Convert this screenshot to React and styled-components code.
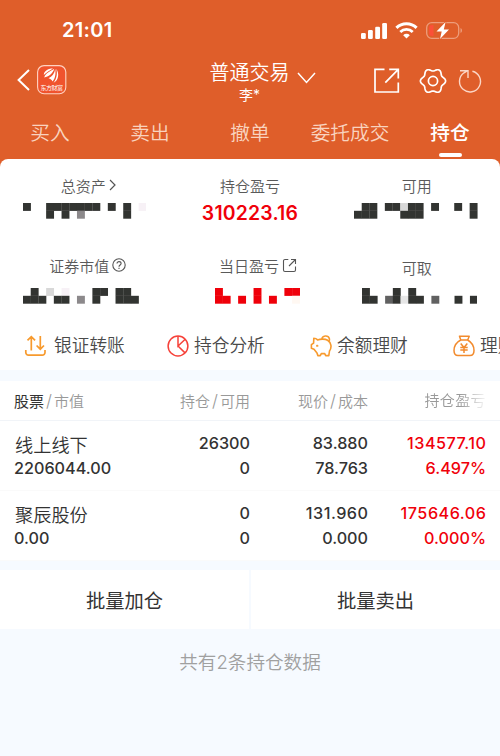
import React from "react";
import styled, { createGlobalStyle } from "styled-components";

const GlobalStyle = createGlobalStyle`
  * {
    box-sizing: border-box;
  }
  body {
    margin: 0;
    background-color: #f6faff;
    font-family: Inter, "Noto Sans CJK SC", sans-serif;
    color: #333;
  }
`;

const Container = styled.div`
  width: 500px;
  height: 756px;
  overflow: hidden;
  background-color: #f6faff;
`;

// Header Styling
const Header = styled.header`
  height: 167px;
  background-color: #df5e2a;
  color: white;
`;

const StatusBar = styled.div`
  height: 60px;
  padding: 0 37px 0 62px;
  display: flex;
  align-items: center;
  justify-content: space-between;
`;

const Clock = styled.div`
  font-size: 20px;
  font-weight: 600;
  line-height: 24px;
  letter-spacing: 0.3px;
`;

const StatusIcons = styled.div`
  display: flex;
  align-items: center;
  gap: 8px;
`;

const TitleBar = styled.div`
  height: 48px;
  padding: 0 18px 0 17px;
  display: grid;
  grid-template-columns: 1fr auto 1fr;
  align-items: start;
`;

const Left = styled.div`
  padding-top: 5px;
  display: flex;
  align-items: center;
  gap: 7px;
`;

const Center = styled.div`
  text-align: center;
`;

const Title = styled.div`
  height: 22px;
  display: flex;
  align-items: center;
  font-size: 20px;
  font-weight: 350;

  svg {
    margin: 14px -26px 0 7px;
  }
`;

const UserName = styled.div`
  font-size: 14px;
  line-height: 26px;
`;

const Right = styled.div`
  padding-top: 5px;
  height: 36px;
  display: flex;
  align-items: center;
  justify-content: flex-end;

  & > :nth-child(2) {
    margin: 0 11px 0 19px;
  }
`;

const Tabs = styled.nav`
  height: 51px;
  display: flex;
`;

const Tab = styled.div`
  flex: 1;
  display: flex;
  flex-direction: column;
  align-items: center;
  font-size: 19.7px;
  line-height: 30px;
  padding-top: 10px;
  font-weight: ${(props) => (props.$active ? 500 : 350)};
  color: ${(props) => (props.$active ? "#fff" : "#f9d3bf")};

  &::after {
    content: "";
    width: 23px;
    height: 4px;
    margin-top: 5px;
    border-radius: 2px;
    background-color: ${(props) => (props.$active ? "#fff" : "transparent")};
  }
`;

// Summary Styling
const Summary = styled.section`
  height: 211px;
  margin-top: -8px;
  border-radius: 8px 8px 0 0;
  background-color: #fff;
  overflow: hidden;
`;

const Stats = styled.div`
  height: 163px;
  padding-top: 15px;
  display: grid;
  grid-template-columns: repeat(3, 1fr);
  grid-template-rows: 80px 68px;
`;

const Stat = styled.div`
  display: flex;
  flex-direction: column;
  align-items: center;
`;

const StatLabel = styled.div`
  height: 22px;
  display: flex;
  align-items: center;
  gap: 3px;
  margin-top: ${(props) => props.$offset || 0}px;
  padding-left: ${(props) => props.$indent || 0}px;
  font-size: 15px;
  font-weight: 350;
  color: #5a5a5a;
`;

const StatValue = styled.div`
  margin-top: 5px;
  font-size: 19.4px;
  line-height: 24px;
  font-weight: 600;
  letter-spacing: 0.2px;
  color: #f0000a;
`;

const MosaicBox = styled.div`
  width: 124px;
  margin-top: ${(props) => props.$top}px;
  margin-left: ${(props) => props.$shift || 0}px;
  padding-left: ${(props) => props.$indent || 0}px;

  svg {
    display: block;
  }
`;

const Shortcuts = styled.div`
  height: 48px;
  display: flex;
  align-items: center;
  padding-left: 24px;
`;

const Shortcut = styled.div`
  width: 143px;
  flex-shrink: 0;
  display: flex;
  align-items: center;
  gap: ${(props) => props.$gap}px;
  font-size: 17.7px;
  font-weight: 350;
  line-height: 26px;
  white-space: nowrap;
  color: #4a4a4a;
`;

// Positions Styling
const Positions = styled.section`
  margin-top: 11px;
  height: 180px;
  background-color: #fff;
`;

const Columns = styled.div`
  display: grid;
  grid-template-columns: 136px 100px 118px 118px;
  padding: 0 14px;
  text-align: right;

  & > :first-child {
    text-align: left;
  }
`;

const TableHead = styled(Columns)`
  height: 40px;
  line-height: 40px;
  border-bottom: 1px solid #f1f4f8;
  font-size: 15px;
  font-weight: 350;
  color: #999;
`;

const Strong = styled.span`
  font-weight: 400;
  color: #333;
`;

const Slash = styled.span`
  display: inline-block;
  width: 10px;
  text-align: center;
  font-size: 17px;
`;

const Faded = styled.div`
  letter-spacing: 0.4px;
  mask-image: linear-gradient(to right, #000 78%, transparent 102%);
`;

const Row = styled(Columns)`
  height: 70px;
  padding-top: 10px;
  border-bottom: 1px solid #fafafa;
  font-size: 16.2px;
  line-height: 25px;
  font-weight: 500;
`;

const Cell = styled.div`
  color: ${(props) => (props.$up ? "#f0000a" : "#333")};
`;

const Line = styled.div`
  height: 25px;
  letter-spacing: ${(props) => (props.$wide ? 0.5 : 0)}px;
  margin-right: ${(props) => (props.$wide ? -0.5 : 0)}px;
`;

const StockName = styled.div`
  height: 25px;
  padding: 2px 0 0 1px;
  font-size: 18.2px;
  font-weight: 350;
  color: #333;
`;

const Actions = styled.div`
  margin-top: 9px;
  display: grid;
  grid-template-columns: 1fr 1fr;
  gap: 2px;
`;

const Action = styled.button`
  height: 59px;
  padding: 0;
  border: none;
  background-color: #fff;
  font-family: inherit;
  font-size: 19.3px;
  font-weight: 400;
  color: #333;
`;

const Footer = styled.div`
  margin-top: 19px;
  text-align: center;
  font-size: 18.6px;
  line-height: 28px;
  font-weight: 350;
  color: #a0a0a0;
`;

const CELL = 7.71;
const SHADES = {
  "#": "#323431",
  r: "#ef000a",
  m: "#616161",
  g: "#8c898b",
  l: "#d8d8d8",
  e: "#e6e6e6",
  p: "#f7f1f6",
  o: "#fff8f2",
};

const Mosaic = ({ rows, top, indent, shift }) => (
  <MosaicBox $top={top} $indent={indent} $shift={shift}>
    <svg width={rows[0].length * CELL} height="16">
      {rows.map((row, y) =>
        row.split("").map((c, x) =>
          SHADES[c] ? (
            <rect
              key={`${x}-${y}`}
              x={x * CELL}
              y={y * 7.8}
              width={CELL + 0.2}
              height="7.9"
              fill={SHADES[c]}
            />
          ) : null
        )
      )}
    </svg>
  </MosaicBox>
);

const SignalIcon = () => (
  <svg width="26" height="17" viewBox="0 0 26 17" fill="#fff">
    <rect x="0" y="11" width="4.800" height="6" rx="1.300" />
    <rect x="7" y="8" width="4.800" height="9" rx="1.300" />
    <rect x="14.200" y="4.700" width="4.800" height="12.300" rx="1.300" />
    <rect x="21.200" y="1" width="4.800" height="16" rx="1.300" />
  </svg>
);

const WifiIcon = () => (
  <svg width="23" height="17" viewBox="0 0 23 17" fill="none" stroke="#fff">
    <path d="M1.4 5.9a14.3 14.3 0 0 1 20.2 0" strokeWidth="3" />
    <path d="M5.3 9.9a8.8 8.8 0 0 1 12.4 0" strokeWidth="2.8" />
    <path d="M11.5 16.5 8.2 13.2a4.7 4.7 0 0 1 6.6 0z" fill="#fff" stroke="none" />
  </svg>
);

const BatteryIcon = () => (
  <svg width="37" height="19" viewBox="0 0 37 19">
    <rect x="0.7" y="1.7" width="32" height="15.6" rx="5" fill="none" stroke="#ed9d7c" strokeWidth="1.3" />
    <path d="M6 4h1.5v11H6a3 3 0 0 1-3-3V7a3 3 0 0 1 3-3z" fill="#fb5038" />
    <path d="M34.5 7c2 .8 2 4.2 0 5z" fill="#ed9d7c" />
    <path
      d="M19.6 1 10.5 10.4h5.2L14 18l9-9.6h-5.2z"
      fill="#fff"
      stroke="#df5e2a"
      strokeWidth="1.6"
      paintOrder="stroke"
    />
  </svg>
);

const BackIcon = () => (
  <svg width="13" height="22" viewBox="0 0 13 22" fill="none" stroke="#fff" strokeWidth="2">
    <path d="M12 1 1.6 11 12 21" />
  </svg>
);

const LogoText = styled.text`
  font-size: 6px;
  font-weight: 400;
  fill: #fff;
`;

const Logo = () => (
  <svg width="30" height="30" viewBox="0 0 30 30">
    <rect x="0.6" y="0.6" width="28.2" height="28.2" rx="6.5" fill="#f0532d" stroke="#ffd3c2" strokeWidth="1.1" />
    <path d="M16 3.600C12 3.600 7 5.500 6.800 10c2.500-2.500 6-4.200 9.200-6.400z" fill="#fff" />
    <path d="M17.300 3.800C13.500 6.300 8 8.500 7.300 12.400c4-.6 8.500-3.600 10-8.600z" fill="#fff" />
    <path d="M18.200 4c-.5 4.500-3.200 7.500-6.700 9.200 2 .6 3.300 1.500 4 3.300C18.300 13.500 19 8.500 18.200 4z" fill="#fff" />
    <path d="M19.300 3.800c1.200 4.700.5 10-2.800 14 5-1.800 6.200-9.300 2.800-14z" fill="#fff" />
    <LogoText x="3.400" y="25.300" textLength="22.500">
      东方财富
    </LogoText>
  </svg>
);

const ChevronDownIcon = () => (
  <svg width="19" height="12" viewBox="0 0 19 12" fill="none" stroke="#fff" strokeWidth="1.5">
    <path d="M1 1l8.500 9.500L18 1" />
  </svg>
);

const ShareIcon = () => (
  <svg width="27" height="27" viewBox="0 0 27 27" fill="none" stroke="#fff" strokeWidth="1.700">
    <path d="M11.500 2.300H2v22.700h23.300V15.500M16.200 2.300h9.100v9.200M25.300 2.300 12.300 15.700" />
  </svg>
);

// six-lobed outline of the gear
const gearPoints = Array.from({ length: 72 }, (_, i) => {
  const angle = (i * Math.PI) / 36;
  const r = 11.3 + 1.3 * Math.cos(6 * angle);
  return `${(14 + r * Math.cos(angle)).toFixed(2)},${(14 + r * Math.sin(angle)).toFixed(2)}`;
}).join(" ");

const SettingsIcon = () => (
  <svg width="28" height="28" viewBox="0 0 28 28" fill="none" stroke="#fff" strokeWidth="1.700" strokeLinejoin="round">
    <polygon points={gearPoints} />
    <circle cx="14" cy="14" r="4.600" />
  </svg>
);

const RefreshIcon = () => (
  <svg width="24" height="26" viewBox="0 0 24 26" fill="none" stroke="#fbd6c6" strokeWidth="1.400">
    <path d="M14.400 3.200A10.500 10.500 0 1 1 6 4.800L9.600 2.700M2 2.700h8V10" />
  </svg>
);

const ChevronRightIcon = () => (
  <svg width="7" height="12" viewBox="0 0 7 12" fill="none" stroke="#555" strokeWidth="1.200">
    <path d="M1 1l5 5-5 5" />
  </svg>
);

const HelpIcon = () => (
  <svg width="14" height="14" viewBox="0 0 14 14" fill="none" stroke="#555" strokeWidth="1.100">
    <circle cx="7" cy="7" r="6.200" />
    <path d="M5 5.600c0-2.700 4.100-2.600 4.100-.1C9.100 7 7 7 7 8.700M7 9.800v1.300" />
  </svg>
);

const OpenIcon = () => (
  <svg width="15" height="15" viewBox="0 0 15 15" fill="none" stroke="#555" strokeWidth="1.100">
    <path d="M6.300 1.500H3A1.500 1.500 0 0 0 1.500 3v9A1.500 1.500 0 0 0 3 13.500h9a1.500 1.500 0 0 0 1.500-1.500V8.500M9 1.500h4.500V6M13.500 1.500 7 8" />
  </svg>
);

const TransferIcon = () => (
  <svg width="23" height="22" viewBox="0 0 23 22" fill="none" stroke="#f79a2e" strokeWidth="1.700">
    <path d="M1.800 15v2.500a2.700 2.700 0 0 0 2.700 2.700h13.800a2.700 2.700 0 0 0 2.700-2.700V15M7.300 15.500V2M3.500 5.400l3.800-3.800 3.800 3.800M16.300 1v13M12.600 10.500l3.700 3.700 3.700-3.700" />
  </svg>
);

const PieIcon = () => (
  <svg width="22" height="22" viewBox="0 0 22 22" fill="none" stroke="#f6423a" strokeWidth="1.500">
    <circle cx="11" cy="11" r="9.900" />
    <path d="M11 1v10l7.200-6.800M11 11l7 6.900" />
  </svg>
);

const PiggyIcon = () => (
  <svg width="22" height="22" viewBox="0 0 22 22" fill="none" stroke="#f79a2e" strokeWidth="1.600" strokeLinejoin="round">
    <path d="M3.800 3.200c1.500 0 2.800.6 3.800 1.700 2.600-1 7.600-1.200 10 .3 3.600 2.300 4.500 7.300 1.900 10.800l-.7 4.600h-3.100l-1-2h-3.400l-1 2H7.800L7 17.900l-3-3.600-2.600-1V9.700l2.200-1.600z" />
    <path d="M12 4.300c-.2-4 6.300-4.500 7.300-.8.400 1.500.1 2.500-.8 3.300" />
    <path d="M6 10.800h2.400M7.200 9.800v2" strokeWidth="1.200" />
  </svg>
);

const MoneyBagIcon = () => (
  <svg width="22" height="22" viewBox="0 0 22 22" fill="none" stroke="#f28b2e" strokeWidth="1.500" strokeLinejoin="round">
    <path d="M6.500 1.200h9.700L14.700 5H7.800zM7.800 5C3 7.500 1 11.500 1 15.500 1 19.500 2.500 20.500 5 20.500h12c2.500 0 4-1 4-5C21 11.500 19 7.500 14.700 5" />
    <path d="m7.700 8.500 3.300 4 3.300-4M7.300 12.500h7.400M7.300 15h7.400M11 12.500V18" />
  </svg>
);

const tabs = ["买入", "卖出", "撤单", "委托成交", "持仓"];

const shortcuts = [
  { name: "银证转账", icon: <TransferIcon />, gap: 7 },
  { name: "持仓分析", icon: <PieIcon />, gap: 5 },
  { name: "余额理财", icon: <PiggyIcon />, gap: 5 },
  { name: "理财", icon: <MoneyBagIcon />, gap: 5 },
];

const stocks = [
  {
    name: "线上线下",
    value: "2206044.00",
    held: "26300",
    usable: "0",
    price: "83.880",
    cost: "78.763",
    profit: "134577.10",
    rate: "6.497%",
  },
  {
    name: "聚辰股份",
    value: "0.00",
    held: "0",
    usable: "0",
    price: "131.960",
    cost: "0.000",
    profit: "175646.06",
    rate: "0.000%",
  },
];

const App = () => {
  return (
    <Container>
      <GlobalStyle />
      <Header>
        <StatusBar>
          <Clock>21:01</Clock>
          <StatusIcons>
            <SignalIcon />
            <WifiIcon />
            <BatteryIcon />
          </StatusIcons>
        </StatusBar>
        <TitleBar>
          <Left>
            <BackIcon />
            <Logo />
          </Left>
          <Center>
            <Title>
              普通交易
              <ChevronDownIcon />
            </Title>
            <UserName>李*</UserName>
          </Center>
          <Right>
            <ShareIcon />
            <SettingsIcon />
            <RefreshIcon />
          </Right>
        </TitleBar>
        <Tabs>
          {tabs.map((tab) => (
            <Tab key={tab} $active={tab === "持仓"}>
              {tab}
            </Tab>
          ))}
        </Tabs>
      </Header>

      <Summary>
        <Stats>
          <Stat>
            <StatLabel $indent={10}>
              总资产
              <ChevronRightIcon />
            </StatLabel>
            <Mosaic top={7} shift={3} rows={["#..#######.#.#.p", "...#.#.g.....#.."]} />
          </Stat>
          <Stat>
            <StatLabel>持仓盈亏</StatLabel>
            <StatValue>310223.16</StatValue>
          </Stat>
          <Stat>
            <StatLabel>可用</StatLabel>
            <Mosaic top={7} shift={-1} rows={[".##.##l##.#..#.#", "###...###......#"]} />
          </Stat>
          <Stat>
            <StatLabel $indent={9}>
              证券市值
              <HelpIcon />
            </StatLabel>
            <Mosaic top={12} shift={3} rows={[".#.l.p...##.##..", "###.##.g.#..###."]} />
          </Stat>
          <Stat>
            <StatLabel $indent={16}>
              当日盈亏
              <OpenIcon />
            </StatLabel>
            <Mosaic top={12} indent={27} rows={["r....r...rr", "rr.r.r.r..o"]} />
          </Stat>
          <Stat>
            <StatLabel $offset={2}>可取</StatLabel>
            <Mosaic top={10} indent={7} rows={["#...#.#........", "##.m#e##.m..#.#"]} />
          </Stat>
        </Stats>
        <Shortcuts>
          {shortcuts.map((item) => (
            <Shortcut key={item.name} $gap={item.gap}>
              {item.icon}
              {item.name}
            </Shortcut>
          ))}
        </Shortcuts>
      </Summary>

      <Positions>
        <TableHead>
          <div>
            <Strong>股票</Strong>
            <Slash>/</Slash>市值
          </div>
          <div>
            持仓<Slash>/</Slash>可用
          </div>
          <div>
            现价<Slash>/</Slash>成本
          </div>
          <Faded>持仓盈亏</Faded>
        </TableHead>
        {stocks.map((stock) => (
          <Row key={stock.name}>
            <Cell>
              <StockName>{stock.name}</StockName>
              <Line>{stock.value}</Line>
            </Cell>
            <Cell>
              <Line>{stock.held}</Line>
              <Line>{stock.usable}</Line>
            </Cell>
            <Cell>
              <Line $wide={stock.price.includes("1")}>{stock.price}</Line>
              <Line>{stock.cost}</Line>
            </Cell>
            <Cell $up>
              <Line $wide>{stock.profit}</Line>
              <Line>{stock.rate}</Line>
            </Cell>
          </Row>
        ))}
      </Positions>

      <Actions>
        <Action>批量加仓</Action>
        <Action>批量卖出</Action>
      </Actions>
      <Footer>共有2条持仓数据</Footer>
    </Container>
  );
};

export default App;
